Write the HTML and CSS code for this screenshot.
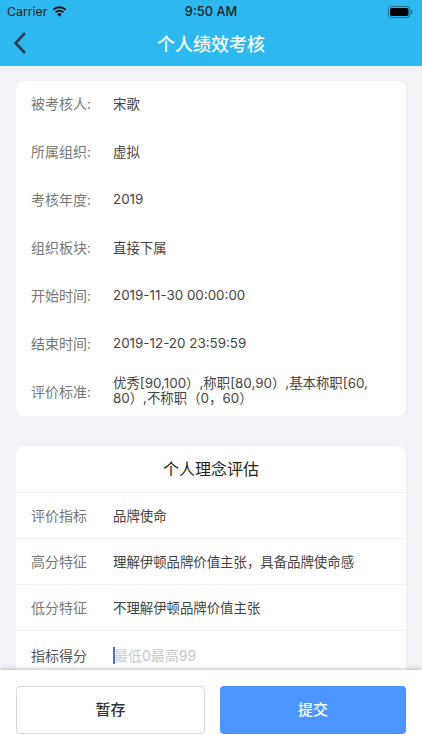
FILE: index.html
```html
<!DOCTYPE html>
<html lang="zh">
<head>
<meta charset="utf-8">
<title>个人绩效考核</title>
<link rel="stylesheet" href="styles.css">
</head>
<body>
<div class="app">
  <header class="top">
    <div class="status">
      <div class="status-left">
        <span>Carrier</span>
        <svg class="wifi" width="15" height="11" viewBox="0 0 16 12"><path d="M8 11.6 5.6 8.9a3.4 3.4 0 0 1 4.8 0zM4.400 7.700 3 6.200a7 7 0 0 1 10 0l-1.400 1.500a5 5 0 0 0-7.200 0zM1.900 5 .4 3.500a10.700 10.700 0 0 1 15.200 0L14.100 5a8.600 8.600 0 0 0-12.200 0z" fill="#111"/></svg>
      </div>
      <span class="clock">9:50 AM</span>
      <div class="status-right">
        <svg width="25" height="12" viewBox="0 0 25 12"><rect x=".5" y=".5" width="21.500" height="11" rx="3" fill="none" stroke="#1a6f8f"/><rect x="2" y="2" width="18.500" height="8" rx="1.800" fill="#000"/><rect x="23" y="4" width="1.300" height="4" rx=".6" fill="#1a6f8f"/></svg>
      </div>
    </div>
    <div class="nav">
      <svg class="back" width="14" height="24" viewBox="0 0 14 24"><path d="M12 2 2.500 12 12 22" fill="none" stroke="#2f3e48" stroke-width="2.600"/></svg>
      <h1>个人绩效考核</h1>
    </div>
  </header>

  <main class="content">
    <section class="card info">
      <div class="info-row"><span class="label">被考核人:</span><span class="value">宋歌</span></div>
      <div class="info-row"><span class="label">所属组织:</span><span class="value">虚拟</span></div>
      <div class="info-row"><span class="label">考核年度:</span><span class="value">2019</span></div>
      <div class="info-row"><span class="label">组织板块:</span><span class="value">直接下属</span></div>
      <div class="info-row"><span class="label">开始时间:</span><span class="value">2019-11-30 00:00:00</span></div>
      <div class="info-row"><span class="label">结束时间:</span><span class="value">2019-12-20 23:59:59</span></div>
      <div class="info-row multi"><span class="label">评价标准:</span><span class="value">优秀[90,100）,称职[80,90）,基本称职[60,<br>80）,不称职（0，60）</span></div>
    </section>

    <section class="card eval">
      <h2>个人理念评估</h2>
      <div class="eval-row"><span class="label">评价指标</span><span class="value">品牌使命</span></div>
      <div class="eval-row"><span class="label">高分特征</span><span class="value">理解伊顿品牌价值主张，具备品牌使命感</span></div>
      <div class="eval-row"><span class="label">低分特征</span><span class="value">不理解伊顿品牌价值主张</span></div>
      <div class="eval-row score"><span class="label">指标得分</span><span class="value input"><i class="caret"></i>最低0最高99</span></div>
    </section>
  </main>

  <footer class="actions">
    <button class="btn save">暂存</button>
    <button class="btn submit">提交</button>
  </footer>
</div>
</body>
</html>
```
FILE: styles.css
```css
* { box-sizing: border-box; }
html, body { margin: 0; padding: 0; }
body {
  width: 422px;
  height: 750px;
  overflow: hidden;
  font-family: "Inter", "Noto Sans CJK SC", sans-serif;
  background: #f2f3f8;
}
.app {
  height: 750px;
  display: flex;
  flex-direction: column;
  position: relative;
  overflow: hidden;
}
.top {
  height: 66px;
  flex: none;
  background: #2db9ef;
}
.status {
  height: 22px;
  padding: 1px 6px 0 7px;
  display: flex;
  align-items: center;
  justify-content: space-between;
  position: relative;
  font-size: 12.300px;
  color: #222;
}
.status-left { display: flex; align-items: center; gap: 5px; }
.status-right { display: flex; align-items: center; padding-right: 3px; }
.clock {
  position: absolute;
  left: 0;
  right: 0;
  text-align: center;
  font-weight: 500;
  font-size: 12.800px;
}
.nav {
  height: 44px;
  display: flex;
  align-items: center;
  justify-content: center;
  position: relative;
}
.back { position: absolute; left: 13px; top: 9px; }
h1 {
  margin: 0 0 3px;
  font-size: 18px;
  font-weight: 500;
  color: #fff;
}
.content {
  flex: 1;
  padding: 15px 16px 0;
  overflow: hidden;
}
.card {
  background: #fff;
  border-radius: 8px;
}
.info { height: 335px; }
.info-row {
  height: 48px;
  display: flex;
  align-items: center;
  padding: 0 0 4px 15px;
  font-size: 14px;
}
.info-row.multi { height: 47px; line-height: 15px; padding-bottom: 3px; }
.label { width: 82px; flex: none; color: #777; }
.value { color: #444; font-size: 13.400px; }
.eval { margin-top: 30px; }
h2 {
  margin: 0;
  height: 47px;
  line-height: 46px;
  text-align: center;
  font-size: 16px;
  font-weight: 400;
  color: #222;
  border-bottom: 1px solid #f2f3f6;
}
.eval-row {
  height: 46px;
  display: flex;
  align-items: center;
  padding: 0 0 2px 15px;
  font-size: 14px;
  border-bottom: 1px solid #f2f3f6;
}
.eval-row.score { border-bottom: 0; padding: 2px 0 0 15px; }
.eval-row.score .label { color: #555; }
.input { color: #c8c8cc; display: flex; align-items: center; font-size: 14px; }
.caret {
  width: 2px;
  height: 17px;
  background: #3f6fe0;
  flex: none;
  margin-right: -1px;
}
.actions {
  position: absolute;
  left: 0;
  right: 0;
  bottom: 0;
  height: 80px;
  background: #fff;
  box-shadow: 0 -1px 4px rgba(0, 0, 0, .25);
  display: flex;
  justify-content: space-between;
  padding: 16px 16px 0;
}
.btn {
  height: 48px;
  padding: 0 0 3px;
  border-radius: 4px;
  font-family: inherit;
  font-size: 15px;
  font-weight: 500;
}
.save {
  width: 189px;
  background: #fff;
  border: 1px solid #d9d9d9;
  color: #333;
}
.submit {
  width: 186px;
  background: #4c94ff;
  border: 0;
  color: #fff;
}
```
